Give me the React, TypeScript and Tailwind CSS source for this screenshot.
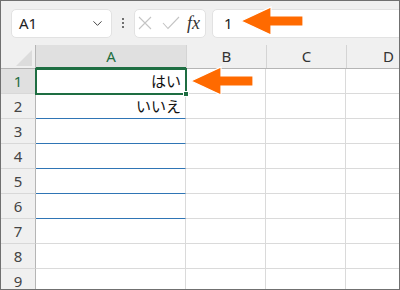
import { ChevronDown } from "lucide-react";

const rows = [1, 2, 3, 4, 5, 6, 7, 8, 9];
const values: Record<number, string> = { 1: "はい", 2: "いいえ" };
const blueRows = [2, 3, 4, 5, 6];

function Arrow({ className }: { className: string }) {
  // left-pointing orange arrow with a thin white edge
  return (
    <svg className={className} viewBox="0 0 64 30" width="64" height="30">
      <path
        d="M1 15 L31 1 L31 10 L63 10 L63 20 L31 20 L31 29 Z"
        fill="#ff6a00"
        stroke="#ffffff"
        strokeWidth="1.2"
        strokeLinejoin="miter"
      />
    </svg>
  );
}

export default function App() {
  return (
    <div
      className="relative w-[400px] h-[290px] overflow-hidden border border-[#707070] bg-white text-[#333]"
      style={{ fontFamily: '"Noto Sans", "Noto Sans CJK JP", sans-serif' }}
    >
      {/* formula bar */}
      <div className="h-[44px] bg-[#f0f0f0] flex items-center pl-[10px]">
        <div className="w-[101px] h-[29px] bg-white rounded-[5px] border border-[#e2e2e2] flex items-center justify-between pl-[7px] pr-[6px]">
          <span className="text-[15px] text-[#222]">A1</span>
          <ChevronDown size={15} strokeWidth={1.6} className="text-[#444]" />
        </div>
        <div className="w-[22px] flex flex-col items-center gap-[2px]">
          <span className="w-[2px] h-[2px] bg-[#444] rounded-full" />
          <span className="w-[2px] h-[2px] bg-[#444] rounded-full" />
          <span className="w-[2px] h-[2px] bg-[#444] rounded-full" />
        </div>
        <div className="w-[72px] h-[29px] bg-white rounded-[5px] border border-[#e2e2e2] flex items-center pl-[3px]">
          <svg width="14" height="14" viewBox="0 0 14 14" className="text-[#c4c4c4]">
            <path d="M1 1 L13 13 M13 1 L1 13" stroke="currentColor" strokeWidth="1.1" fill="none" />
          </svg>
          <svg width="18" height="14" viewBox="0 0 18 14" className="ml-[10px] text-[#c4c4c4]">
            <path d="M1 7 L6 12.5 L17 1" stroke="currentColor" strokeWidth="1.1" fill="none" />
          </svg>
          <span
            className="ml-[7px] text-[18px] italic text-[#333] leading-none"
            style={{ fontFamily: '"Liberation Serif", serif' }}
          >
            fx
          </span>
        </div>
        <div className="ml-[6px] flex-1 -mr-[10px] h-[29px] bg-white rounded-l-[5px] border border-[#e2e2e2] flex items-center pl-[11px]">
          <span className="text-[15px] text-[#222]">1</span>
        </div>
      </div>

      {/* column headers */}
      <div className="h-[24px] flex bg-[#f0f0f0] border-b border-[#b5b5b5] text-[15px]">
        <div className="w-[35px] border-r border-[#b5b5b5] relative">
          <div className="absolute right-[3px] bottom-[2px] w-0 h-0 border-l-[16px] border-l-transparent border-b-[16px] border-b-[#dcdcdc]" />
        </div>
        <div className="w-[150px] bg-[#e0e0e0] flex items-center justify-center text-[#1e6e42] border-b-2 border-[#1e6e42] -mb-[1px]">
          A
        </div>
        <div className="w-[80px] flex items-center justify-center border-l border-[#d4d4d4]">B</div>
        <div className="w-[80px] flex items-center justify-center border-l border-[#d4d4d4]">C</div>
        <div className="flex-1 flex items-center justify-end pr-[5px] border-l border-[#d4d4d4]">D</div>
      </div>

      {/* grid */}
      <div className="relative">
        {rows.map((r) => (
          <div key={r} className="h-[25px] flex">
            <div
              className={`w-[35px] flex items-center justify-center text-[15px] border-r border-[#b5b5b5] border-b border-b-[#d8d8d8] ${
                r === 1 ? "bg-[#e0e0e0] text-[#1e6e42]" : "bg-[#f0f0f0] text-[#444]"
              }`}
            >
              {r}
            </div>
            <div
              className={`w-[150px] flex items-center justify-end pr-[4px] text-[15px] text-[#111] border-r border-[#dadada] border-b ${
                blueRows.includes(r) ? "border-b-[#2f75b5]" : "border-b-[#dadada]"
              }`}
              style={{ fontFamily: '"Noto Sans CJK JP", sans-serif' }}
            >
              {values[r] ?? ""}
            </div>
            <div className="w-[80px] border-r border-b border-[#dadada]" />
            <div className="w-[80px] border-r border-b border-[#dadada]" />
            <div className="flex-1 border-b border-[#dadada]" />
          </div>
        ))}
        {/* active cell */}
        <div className="absolute left-[34px] -top-[1px] w-[152px] h-[27px] border-2 border-[#1e6e42]">
          <div className="absolute -right-[4px] -bottom-[4px] w-[6px] h-[6px] bg-[#1e6e42] border border-white" />
        </div>
      </div>

      <Arrow className="absolute left-[239px] top-[5px]" />
      <Arrow className="absolute left-[189px] top-[65px]" />
    </div>
  );
}
